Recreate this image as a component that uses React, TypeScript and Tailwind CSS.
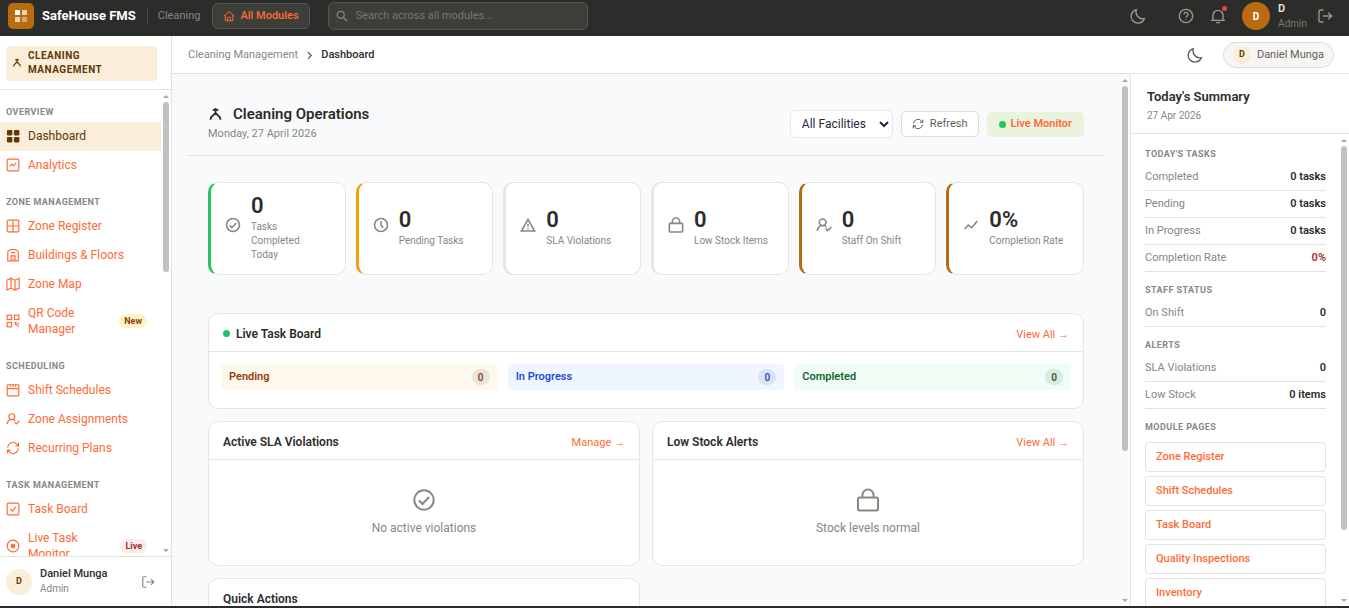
import type { ReactNode } from "react";

type IconName =
  | "cleaner" | "dashboard" | "analytics" | "zone" | "building" | "map" | "qr" | "calendar"
  | "userCheck" | "refresh" | "checkSquare" | "live" | "home" | "search" | "moon" | "help"
  | "bell" | "logout" | "checkCircle" | "clock" | "warning" | "lock" | "trend" | "chevron";

const shapes: Record<IconName, ReactNode> = {
  cleaner: (
    <>
      <path d="M7.500 4.500h9M12 1.500v7" strokeWidth="3" />
      <path d="M4 20.500c0-3 .5-4.500 3-6L12 9.500l5 5c2.500 1.500 3 3 3 6" strokeWidth="3" />
    </>
  ),
  dashboard: (
    <g fill="currentColor" stroke="none">
      <rect x="1.500" y="1.500" width="9.500" height="9.500" rx="2" />
      <rect x="13.500" y="1.500" width="9.500" height="9.500" rx="2" />
      <rect x="1.500" y="13.500" width="9.500" height="9.500" rx="2" />
      <rect x="13.500" y="13.500" width="9.500" height="9.500" rx="2" />
    </g>
  ),
  analytics: (
    <>
      <rect x="2" y="2" width="20" height="20" rx="2" />
      <path d="m6.500 14.500 3.500-4 3 3 4.500-5" />
    </>
  ),
  zone: (
    <>
      <rect x="2" y="2" width="20" height="20" rx="2" />
      <path d="M12 2v20M2 12h20" />
    </>
  ),
  building: (
    <>
      <path d="M3 22V7c0-1 .4-1.500 1.300-2L8 2.500h8L19.700 5c.9.500 1.300 1 1.300 2v15Z" />
      <path d="M8.500 21.500v-8h7v8M12 18v3.500M8 8h8" />
    </>
  ),
  map: <path d="M1.500 5.500 8.500 2l7 3.500 7-3.500v17l-7 3.500-7-3.500-7 3.500ZM8.500 2v17M15.500 5.500v17" />,
  qr: (
    <>
      <rect x="2" y="2" width="7.500" height="7.500" />
      <rect x="14.500" y="2" width="7.500" height="7.500" />
      <rect x="2" y="14.500" width="7.500" height="7.500" />
      <path d="M14.500 14.500h4M16 15v4M17 16.500l4.500 5M21.500 14.500v3" />
    </>
  ),
  calendar: (
    <>
      <rect x="2" y="3" width="20" height="19" rx="1.500" />
      <path d="M2 9.500h20M7.500 3v3.500M12 3v3.500M16.500 3v3.500" />
    </>
  ),
  userCheck: (
    <>
      <circle cx="10" cy="8" r="5" />
      <path d="M2 20.500c0-3.500 1.500-5.500 5-7.500M13 12.500l2.500 3M14.500 17.500l3 3L23 15" />
    </>
  ),
  refresh: (
    <path d="M3 11a9 9 0 0 1 16-5l2 2.500M21.500 3v5.500H16M21 13a9 9 0 0 1-16 5l-2-2.500M2.500 21v-5.500H8" />
  ),
  checkSquare: (
    <>
      <rect x="2" y="2" width="20" height="20" rx="2" />
      <path d="m7.500 12 3.500 3.500 6-7" />
    </>
  ),
  live: (
    <>
      <circle cx="12" cy="12" r="10" />
      <circle cx="12" cy="12" r="3" fill="currentColor" />
    </>
  ),
  home: (
    <>
      <path d="M1.500 12.500 12 3l10.500 9.500M4.500 10.500v11h15v-11" />
      <path d="M9 21v-4a3 3 0 0 1 6 0v4" />
    </>
  ),
  search: (
    <>
      <circle cx="9.500" cy="9.500" r="7" strokeWidth="2.500" />
      <path d="m15 15 7 7" strokeWidth="3" />
    </>
  ),
  moon: <path d="M9.500 2.500A10.500 10.500 0 0 0 21.500 16 10.200 10.200 0 1 1 9.500 2.500Z" />,
  help: (
    <>
      <circle cx="12" cy="12" r="10" />
      <path d="M9 9.500a3 3 0 1 1 4.500 2.600c-1 .6-1.500 1-1.500 2M12 16.500v1.200" />
    </>
  ),
  bell: (
    <path d="M1.500 18.500h21M4.500 18.500V11a7.500 7.500 0 0 1 15 0v7.500M9 22h6" />
  ),
  logout: (
    <path d="M9.500 3H5a2 2 0 0 0-2 2v14a2 2 0 0 0 2 2h4.500M9 12h13M17 7l5 5-5 5" />
  ),
  checkCircle: (
    <>
      <circle cx="12" cy="12" r="9.700" />
      <path d="m7 12.500 3.500 3.500 6.500-7" />
    </>
  ),
  clock: (
    <>
      <circle cx="12" cy="12" r="9.700" />
      <path d="M12 6.500V12l3 4" />
    </>
  ),
  warning: (
    <>
      <path d="M12 3.500 2 21h20Z" />
      <path d="M12 10v4.500M12 16.500v2" />
    </>
  ),
  lock: (
    <>
      <rect x="2" y="9.500" width="20" height="13" rx="1.500" />
      <path d="M6.500 9.500V7a5.500 5.500 0 0 1 11 0v2.500" />
    </>
  ),
  trend: <path d="m2.500 18 5.500-6 5 4 8.500-10" />,
  chevron: <path d="m8 3 8.500 9L8 21" strokeWidth="3.500" />,
};

function Icon({ name, className }: { name: IconName; className: string }) {
  return (
    <svg
      viewBox="0 0 24 24"
      fill="none"
      stroke="currentColor"
      strokeWidth="2"
      aria-hidden="true"
      className={`shrink-0 ${className}`}
    >
      {shapes[name]}
    </svg>
  );
}

function ScrollTrack({ thumb }: { thumb: string }) {
  return (
    <div aria-hidden="true" className="flex w-[10px] shrink-0 flex-col items-center pt-[5px] pb-1">
      <span className="border-x-[3px] border-b-[3px] border-x-transparent border-b-[#a8a8a8]" />
      <span className={`mt-1 w-1.5 rounded-full bg-[#c1c1c1] ${thumb}`} />
      <span className="mt-auto border-x-[3px] border-t-[3px] border-x-transparent border-t-[#a8a8a8]" />
    </div>
  );
}

interface NavItem {
  label: string;
  icon: IconName;
  active?: boolean;
  badge?: { text: string; tone: string };
}

const nav: { title: string; items: NavItem[] }[] = [
  {
    title: "Overview",
    items: [
      { label: "Dashboard", icon: "dashboard", active: true },
      { label: "Analytics", icon: "analytics" },
    ],
  },
  {
    title: "Zone Management",
    items: [
      { label: "Zone Register", icon: "zone" },
      { label: "Buildings & Floors", icon: "building" },
      { label: "Zone Map", icon: "map" },
      { label: "QR Code Manager", icon: "qr", badge: { text: "New", tone: "bg-[#fef3c7] text-[#92400e]" } },
    ],
  },
  {
    title: "Scheduling",
    items: [
      { label: "Shift Schedules", icon: "calendar" },
      { label: "Zone Assignments", icon: "userCheck" },
      { label: "Recurring Plans", icon: "refresh" },
    ],
  },
  {
    title: "Task Management",
    items: [
      { label: "Task Board", icon: "checkSquare" },
      { label: "Live Task Monitor", icon: "live", badge: { text: "Live", tone: "bg-[#fcebeb] text-[#a32d2d]" } },
    ],
  },
];

const stats: { value: string; label: string; icon: IconName; edge: string }[] = [
  { value: "0", label: "Tasks Completed Today", icon: "checkCircle", edge: "border-l-[#22c55e]" },
  { value: "0", label: "Pending Tasks", icon: "clock", edge: "border-l-[#f59e0b]" },
  { value: "0", label: "SLA Violations", icon: "warning", edge: "border-l-[#e5e5e3]" },
  { value: "0", label: "Low Stock Items", icon: "lock", edge: "border-l-[#e5e5e3]" },
  { value: "0", label: "Staff On Shift", icon: "userCheck", edge: "border-l-[#ba6b10]" },
  { value: "0%", label: "Completion Rate", icon: "trend", edge: "border-l-[#ba6b10]" },
];

const columns = [
  { label: "Pending", tone: "bg-[#fff8ed] text-[#92400e]" },
  { label: "In Progress", tone: "bg-[#eff6ff] text-[#1d4ed8]" },
  { label: "Completed", tone: "bg-[#f0fdf4] text-[#166534]" },
];

const summary = [
  {
    title: "Today's Tasks",
    rows: [
      ["Completed", "0 tasks"],
      ["Pending", "0 tasks"],
      ["In Progress", "0 tasks"],
      ["Completion Rate", "0%"],
    ],
  },
  { title: "Staff Status", rows: [["On Shift", "0"]] },
  {
    title: "Alerts",
    rows: [
      ["SLA Violations", "0"],
      ["Low Stock", "0 items"],
    ],
  },
];

const modulePages = ["Zone Register", "Shift Schedules", "Task Board", "Quality Inspections", "Inventory"];

function TopBar() {
  return (
    <header className="flex h-9 shrink-0 items-center bg-[#2c2c2a] pr-4 pb-1 pl-2">
      <span className="flex size-[26px] items-center justify-center rounded-[5px] bg-[#ba6b10]">
        <svg viewBox="0 0 12 12" className="size-3 fill-white" aria-hidden="true">
          <rect width="5" height="5" rx="0.500" />
          <rect x="7" width="5" height="5" rx="0.500" opacity="0.700" />
          <rect y="7" width="5" height="5" rx="0.500" opacity="0.700" />
          <rect x="7" y="7" width="5" height="5" rx="0.500" opacity="0.400" />
        </svg>
      </span>
      <span className="ml-2 text-[13px] font-bold text-white">SafeHouse FMS</span>
      <span className="ml-[11px] h-[18px] w-px bg-[#4a4a48]" />
      <span className="ml-[10px] text-[11px] text-[#888780]">Cleaning</span>
      <a
        href="#modules"
        className="ml-3 flex h-[26px] items-center gap-[5px] rounded-md border border-[#555553] bg-[#3d3d3a] px-[10px] text-[11px] font-medium text-[#ff6b35]"
      >
        <Icon name="home" className="size-3" />
        All Modules
      </a>
      <label className="ml-[18px] flex h-7 w-[260px] items-center gap-2 rounded-md border border-[#555553] bg-[#3d3d3a] px-[7px] text-[#888780]">
        <Icon name="search" className="size-3" />
        <input
          type="search"
          aria-label="Search across all modules"
          placeholder="Search across all modules..."
          className="w-full bg-transparent text-[11px] outline-none placeholder:text-[#777770]"
        />
      </label>
      <div className="ml-auto flex items-center text-[#9c9a92]">
        <button aria-label="Dark mode"><Icon name="moon" className="size-4" /></button>
        <button aria-label="Help" className="ml-8"><Icon name="help" className="size-4" /></button>
        <button aria-label="Notifications" className="relative ml-4">
          <Icon name="bell" className="size-4" />
          <span className="absolute -top-0.5 -right-px size-[5px] rounded-full bg-[#ef4444]" />
        </button>
        <span className="ml-4 flex size-7 items-center justify-center rounded-full bg-[#ba6b10] text-[10px] font-bold text-white">
          D
        </span>
        <span className="ml-2 leading-[15px]">
          <span className="block text-[11px] font-semibold text-[#e8e6de]">D</span>
          <span className="block text-[10px] text-[#777770]">Admin</span>
        </span>
        <button aria-label="Sign out" className="ml-[10px]"><Icon name="logout" className="size-4" /></button>
      </div>
    </header>
  );
}

function Sidebar() {
  return (
    <aside className="flex w-[172px] shrink-0 flex-col border-r border-[#e2e2e0] bg-white">
      <div className="border-b border-[#e2e2e0] pt-[10px] pr-[14px] pb-2 pl-1.5">
        <div className="flex items-center gap-1.5 rounded bg-[#faeeda] pt-[3px] pb-1 pl-1.5 text-[10px] leading-[14px] font-bold tracking-wider text-[#633806] uppercase">
          <Icon name="cleaner" className="size-[10px]" />
          <span className="w-24">Cleaning Management</span>
        </div>
      </div>
      <div className="flex min-h-0 flex-1">
        <nav className="min-w-0 flex-1 overflow-y-auto [scrollbar-width:none]">
          {nav.map((section) => (
            <section key={section.title}>
              <h2 className="pt-4 pb-1 pl-1.5 text-[9px] leading-3 font-bold tracking-wider text-[#888780] uppercase">
                {section.title}
              </h2>
              {section.items.map((item) => (
                <a
                  key={item.label}
                  href="#page"
                  className={`flex items-center gap-2 py-1.5 pr-[14px] pb-[7px] pl-1.5 text-xs leading-4 ${
                    item.active ? "bg-[#faeeda] text-[#633806]" : "text-[#ff6b35]"
                  }`}
                >
                  <Icon name={item.icon} className="size-[14px]" />
                  <span className={item.badge ? "w-[60px] flex-none" : "flex-1"}>{item.label}</span>
                  {item.badge && (
                    <span className={`ml-auto rounded-full px-[5px] text-[9px] leading-[14px] font-bold ${item.badge.tone}`}>
                      {item.badge.text}
                    </span>
                  )}
                </a>
              ))}
            </section>
          ))}
        </nav>
        <ScrollTrack thumb="h-[170px]" />
      </div>
      <div className="flex h-[50px] shrink-0 items-center border-t border-[#e2e2e0] pr-4 pl-1.5">
        <span className="flex size-[26px] items-center justify-center rounded-full bg-[#faeeda] text-[9px] font-bold text-[#633806]">
          D
        </span>
        <span className="ml-2 pb-0.5 leading-[15px]">
          <span className="block text-[11px] font-medium text-[#2c2c2a]">Daniel Munga</span>
          <span className="block text-[10px] text-[#888780]">Admin</span>
        </span>
        <button aria-label="Log out" className="ml-auto text-[#888780]">
          <Icon name="logout" className="size-[14px]" />
        </button>
      </div>
    </aside>
  );
}

function SubHeader() {
  return (
    <div className="flex h-[38px] shrink-0 items-center border-b border-[#e2e2e0] bg-white pr-[15px] pl-4">
      <nav className="flex items-center gap-[7px] pt-px text-[11px] leading-4" aria-label="Breadcrumb">
        <a href="#cleaning" className="text-[#888780]">Cleaning Management</a>
        <Icon name="chevron" className="size-[9px] text-[#5f5e5a]" />
        <span className="font-medium text-[#2c2c2a]">Dashboard</span>
      </nav>
      <button aria-label="Dark mode" className="ml-auto text-[#5f5e5a]">
        <Icon name="moon" className="size-4" />
      </button>
      <button className="ml-5 flex h-[26px] items-center gap-1.5 rounded-full border border-[#dddcd8] bg-[#f7f6f3] px-[9px] text-[11px] text-[#5f5e5a]">
        <span className="flex size-[18px] items-center justify-center rounded-full bg-[#faeeda] text-[9px] font-bold text-[#633806]">
          D
        </span>
        <span className="pt-px leading-4">Daniel Munga</span>
      </button>
    </div>
  );
}

function Card({ title, link, dot, className = "", children }: {
  title: string;
  link?: string;
  dot?: boolean;
  className?: string;
  children?: ReactNode;
}) {
  return (
    <section className={`rounded-[10px] border border-[#e5e5e3] bg-white ${className}`}>
      <div className="flex h-[38px] items-center border-b border-[#e5e5e3] px-[14px] pt-0.5">
        {dot && <span className="mr-1.5 size-[7px] rounded-full bg-[#22c55e]" />}
        <h2 className="text-xs font-semibold text-[#2c2c2a]">{title}</h2>
        {link && (
          <a href="#more" className="ml-auto pt-px text-[11px] leading-4 text-[#ff6b35]">
            {link} <span className="font-['Liberation_Sans',sans-serif]">→</span>
          </a>
        )}
      </div>
      {children}
    </section>
  );
}

function Empty({ icon, text }: { icon: IconName; text: string }) {
  return (
    <div className="flex h-[105px] flex-col items-center gap-2 pt-7 text-xs text-[#888780]">
      <Icon name={icon} className="size-6" />
      {text}
    </div>
  );
}

function Dashboard() {
  return (
    <main className="min-w-0 flex-1 overflow-y-auto px-4 pt-4 [scrollbar-width:none]">
      <div className="flex items-center border-b border-[#dddfe2] px-5 pt-3.5 pb-[11px]">
        <div>
          <h1 className="flex items-center gap-2.5 text-[15px] leading-5 font-semibold text-[#2c2c2a]">
            <Icon name="cleaner" className="size-[15px]" />
            Cleaning Operations
          </h1>
          <p className="text-[11px] leading-5 text-[#888780]">Monday, 27 April 2026</p>
        </div>
        <div className="ml-auto flex items-center gap-2">
          <select
            aria-label="Facility"
            className="h-7 w-[103px] rounded-md border border-[#e2e8f0] bg-white pl-[7px] text-xs text-[#1e293b]"
          >
            <option>All Facilities</option>
          </select>
          <button className="flex h-[26px] items-center gap-1.5 rounded-[5px] border border-[#dddcd8] bg-white px-[10px] text-[11px] text-[#5f5e5a]">
            <Icon name="refresh" className="size-3" />
            Refresh
          </button>
          <a
            href="#live"
            className="flex h-[25px] items-center gap-[5px] rounded-[5px] bg-[#eaf3de] px-3 text-[11px] font-semibold text-[#ff6b35]"
          >
            <span className="size-[7px] rounded-full bg-[#22c55e]" />
            Live Monitor
          </a>
        </div>
      </div>
      <div className="px-5 pt-[26px]">
        <div className="grid grid-cols-6 gap-[10px]">
          {stats.map((s) => (
            <article
              key={s.label}
              className={`flex h-[93px] items-center gap-[10px] rounded-[10px] border border-l-[3px] border-[#e5e5e3] bg-white pr-[18px] pl-[14px] ${s.edge}`}
            >
              <Icon name={s.icon} className="mb-[7px] size-4 text-[#888780] [stroke-width:2.4]" />
              <div>
                <div className="text-[22px] leading-5 font-semibold text-[#2c2c2a]">{s.value}</div>
                <div className="mt-1 text-[10px] leading-[14px] text-[#888780]">{s.label}</div>
              </div>
            </article>
          ))}
        </div>
        <Card title="Live Task Board" link="View All" dot className="mt-[38px]">
          <div className="grid grid-cols-3 gap-[10px] px-3 pt-3 pb-[18px]">
            {columns.map((c) => (
              <div
                key={c.label}
                className={`flex h-[26px] items-center justify-between rounded px-2 text-[11px] font-semibold ${c.tone}`}
              >
                {c.label}
                <span className="flex h-4 w-[18px] items-center justify-center rounded-full bg-black/8 text-[10px]">0</span>
              </div>
            ))}
          </div>
        </Card>
        <div className="mt-3 grid grid-cols-2 gap-3">
          <Card title="Active SLA Violations" link="Manage">
            <Empty icon="checkCircle" text="No active violations" />
          </Card>
          <Card title="Low Stock Alerts" link="View All">
            <Empty icon="lock" text="Stock levels normal" />
          </Card>
          <Card title="Quick Actions" />
        </div>
      </div>
    </main>
  );
}

function SummaryPanel() {
  const heading = "pt-3 text-[9px] leading-3 font-bold tracking-wider text-[#888780] uppercase";
  return (
    <aside className="flex w-[219px] shrink-0 flex-col border-l border-[#e2e2e0] bg-white">
      <div className="h-[60px] shrink-0 border-b border-[#e2e2e0] px-4 pt-[13px]">
        <h2 className="text-[13px] leading-5 font-semibold text-[#2c2c2a]">Today's Summary</h2>
        <p className="text-[10px] leading-[18px] text-[#888780]">27 Apr 2026</p>
      </div>
      <div className="flex min-h-0 flex-1">
        <div className="min-w-0 flex-1 overflow-y-auto pt-0.5 pr-[13px] pl-[14px] [scrollbar-width:none]">
          {summary.map((group) => (
            <section key={group.title}>
              <h3 className={`${heading} pb-1`}>{group.title}</h3>
              <dl>
                {group.rows.map(([label, value]) => (
                  <div key={label} className="flex h-[27px] items-center justify-between border-b border-[#e2e2e0] text-[11px]">
                    <dt className="text-[#888780]">{label}</dt>
                    <dd className={`font-semibold ${value === "0%" ? "text-[#a32d2d]" : "text-[#2c2c2a]"}`}>{value}</dd>
                  </div>
                ))}
              </dl>
            </section>
          ))}
          <h3 className={`${heading} pb-[9px]`}>Module Pages</h3>
          <div className="flex flex-col gap-1">
            {modulePages.map((page) => (
              <a
                key={page}
                href="#page"
                className="flex h-[30px] items-center rounded border border-[#e2e2e0] px-[10px] text-[11px] font-medium text-[#ff6b35]"
              >
                {page}
              </a>
            ))}
          </div>
        </div>
        <ScrollTrack thumb="h-[384px]" />
      </div>
    </aside>
  );
}

export default function App() {
  return (
    <div className="flex h-screen flex-col overflow-hidden border-b-2 border-[#2c2c2e] bg-[#f9fafc] font-['Roboto',sans-serif]">
      <TopBar />
      <div className="flex min-h-0 flex-1">
        <Sidebar />
        <div className="flex min-w-0 flex-1 flex-col">
          <SubHeader />
          <div className="flex min-h-0 flex-1">
            <Dashboard />
            <ScrollTrack thumb="h-[365px]" />
            <SummaryPanel />
          </div>
        </div>
      </div>
    </div>
  );
}
